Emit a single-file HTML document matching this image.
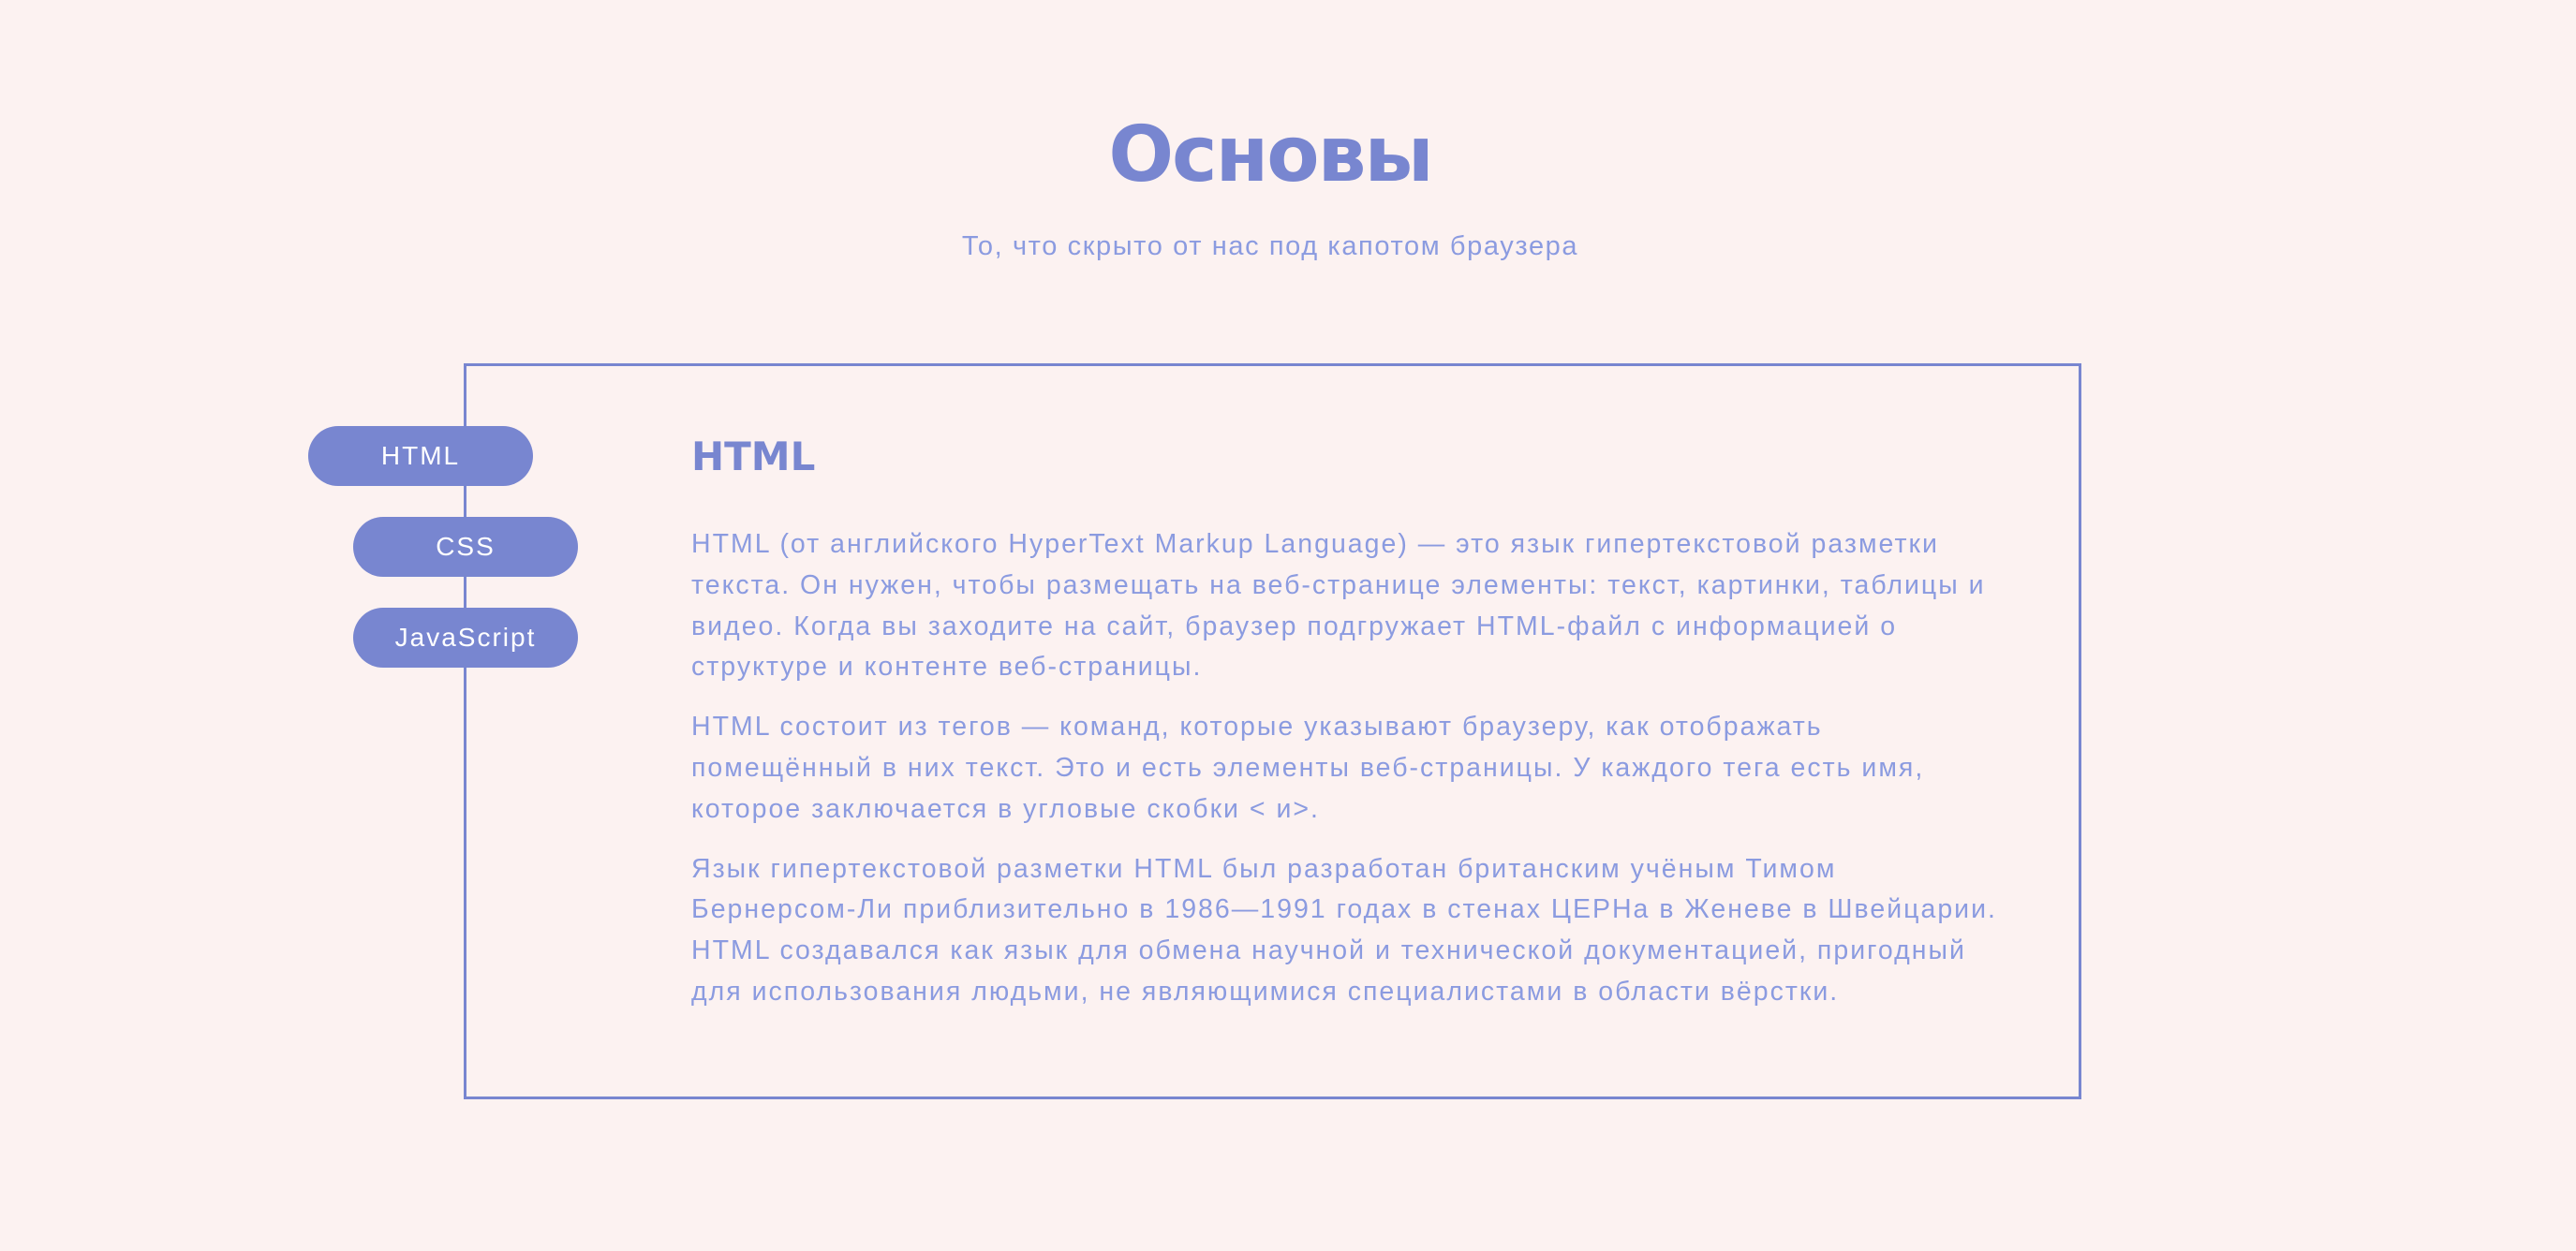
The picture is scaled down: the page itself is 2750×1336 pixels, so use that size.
<!DOCTYPE html>
<html><head><meta charset="utf-8"><style>
html,body{margin:0;padding:0;}
body{width:2750px;height:1336px;background:#fcf2f1;position:relative;overflow:hidden;font-family:"Liberation Sans","DejaVu Sans",sans-serif;}
.title{position:absolute;left:0;width:2712px;top:116px;text-align:center;font-family:"DejaVu Sans",sans-serif;font-weight:bold;font-size:82px;line-height:100px;color:#7886d0;letter-spacing:-2px;}
.sub{position:absolute;left:0;width:2712px;top:246px;text-align:center;font-size:29px;line-height:34px;color:#8b9be0;letter-spacing:1.6px;}
.box{position:absolute;left:495px;top:388px;width:1721px;height:780px;border:3px solid #7886d0;}
.pill{position:absolute;height:64px;width:240px;border-radius:32px;background:#7886d0;color:#fff;font-size:28px;line-height:64px;text-align:center;letter-spacing:2px;}
h2{position:absolute;left:738px;top:458px;margin:0;font-family:"DejaVu Sans",sans-serif;font-weight:bold;font-size:42px;line-height:60px;color:#7886d0;}
.txt{position:absolute;left:738px;top:560px;width:1450px;font-size:28.5px;line-height:43.8px;color:#8b9be0;white-space:nowrap;letter-spacing:2px;}
.txt p{margin:0 0 20px 0;}
</style></head><body>
<div class="title">Основы</div>
<div class="sub">То, что скрыто от нас под капотом браузера</div>
<div class="box"></div>
<div class="pill" style="left:329px;top:455px;">HTML</div>
<div class="pill" style="left:377px;top:552px;">CSS</div>
<div class="pill" style="left:377px;top:649px;">JavaScript</div>
<h2>HTML</h2>
<div class="txt">
<p>HTML (от английского HyperText Markup Language) — это язык гипертекстовой разметки<br>текста. Он нужен, чтобы размещать на веб-странице элементы: текст, картинки, таблицы и<br>видео. Когда вы заходите на сайт, браузер подгружает HTML-файл с информацией о<br>структуре и контенте веб-страницы.</p>
<p>HTML состоит из тегов — команд, которые указывают браузеру, как отображать<br>помещённый в них текст. Это и есть элементы веб-страницы. У каждого тега есть имя,<br>которое заключается в угловые скобки &lt; и&gt;.</p>
<p>Язык гипертекстовой разметки HTML был разработан британским учёным Тимом<br>Бернерсом-Ли приблизительно в 1986—1991 годах в стенах ЦЕРНа в Женеве в Швейцарии.<br>HTML создавался как язык для обмена научной и технической документацией, пригодный<br>для использования людьми, не являющимися специалистами в области вёрстки.</p>
</div>
</body></html>
